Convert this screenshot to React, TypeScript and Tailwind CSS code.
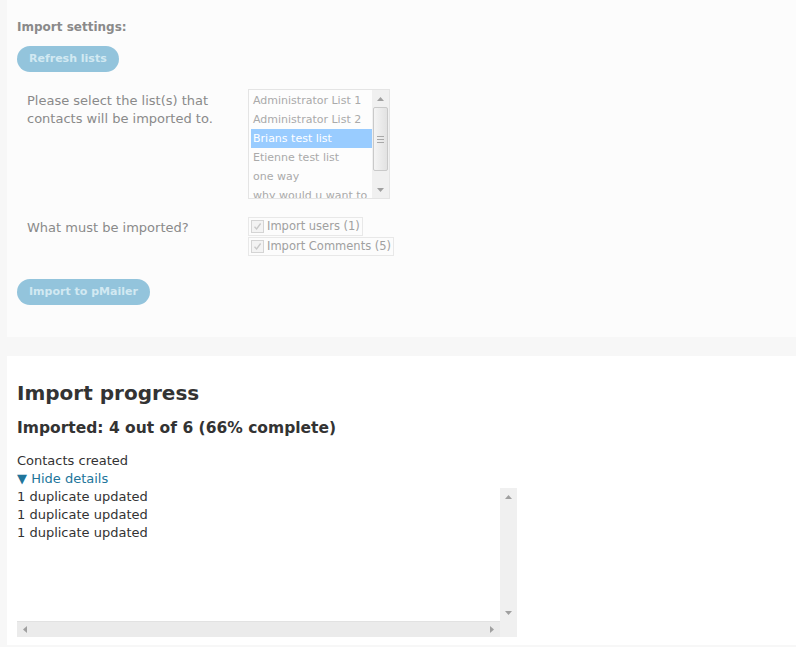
import React from "react";

const font = { fontFamily: '"DejaVu Sans", Verdana, sans-serif' };

function UpArrow({ color = "#a0a0a0" }: { color?: string }) {
  return (
    <svg width="7" height="4" viewBox="0 0 7 4">
      <polygon points="3.5,0 7,4 0,4" fill={color} />
    </svg>
  );
}
function DownArrow({ color = "#a0a0a0" }: { color?: string }) {
  return (
    <svg width="7" height="4" viewBox="0 0 7 4">
      <polygon points="0,0 7,0 3.5,4" fill={color} />
    </svg>
  );
}
function LeftArrow({ color = "#a0a0a0" }: { color?: string }) {
  return (
    <svg width="4" height="7" viewBox="0 0 4 7">
      <polygon points="4,0 4,7 0,3.5" fill={color} />
    </svg>
  );
}
function RightArrow({ color = "#a0a0a0" }: { color?: string }) {
  return (
    <svg width="4" height="7" viewBox="0 0 4 7">
      <polygon points="0,0 4,3.5 0,7" fill={color} />
    </svg>
  );
}

function CheckRow({ label }: { label: string }) {
  return (
    <div className="flex items-center h-[19px] border border-[#e8e8e8] pl-[2px] pr-[2px] w-fit">
      <div className="w-[13px] h-[13px] border border-[#d4d4d4] bg-[#f3f3f3] flex items-center justify-center">
        <svg width="9" height="9" viewBox="0 0 9 9">
          <path d="M1.5 4.8 L3.6 7 L7.6 1.5" stroke="#c8c8c8" strokeWidth="1.3" fill="none" />
        </svg>
      </div>
      <span className="ml-[3px] text-[11.5px] text-[#a0a0a0] leading-[17px]">{label}</span>
    </div>
  );
}

export default function App() {
  const items = [
    "Administrator List 1",
    "Administrator List 2",
    "Brians test list",
    "Etienne test list",
    "one way",
    "why would u want to",
  ];
  return (
    <div className="min-h-screen bg-[#f7f7f7] pl-[7px]" style={font}>
      {/* Import settings panel */}
      <div className="bg-[#fcfcfc] h-[337px] pl-[10px] pt-[19px]">
        <div className="text-[12px] font-bold text-[#8a8a8a] leading-[16px]">Import settings:</div>
        <button className="mt-[11px] h-[26px] px-[12px] rounded-full bg-[#93c4dc] text-[#d2e9f2] text-[11px] font-bold">
          Refresh lists
        </button>
        <div className="flex mt-[17px] pl-[10px]">
          <div className="w-[221px] text-[13px] text-[#8a8a8a] leading-[18px] pt-[3px]">
            Please select the list(s) that
            <br />
            contacts will be imported to.
          </div>
          <div className="w-[142px] h-[110px] border border-[#e4e4e4] bg-[#fdfdfd] flex overflow-hidden">
            <div className="flex-1 pl-[2px] pt-[1px] overflow-hidden">
              {items.map((it, i) => (
                <div
                  key={it}
                  className={
                    "h-[19px] leading-[19px] pl-[2px] text-[11px] whitespace-nowrap " +
                    (i === 2 ? "bg-[#99ccff] text-white" : "text-[#aaaaaa]")
                  }
                >
                  {it}
                </div>
              ))}
            </div>
            <div className="w-[17px] bg-[#f0f0f0] flex flex-col items-center">
              <div className="h-[17px] flex items-center justify-center">
                <UpArrow />
              </div>
              <div className="w-[15px] h-[64px] border border-[#c9c9c9] rounded-[2px] bg-gradient-to-r from-[#f4f4f4] to-[#e2e2e2] flex flex-col items-center justify-center gap-[2px]">
                <div className="w-[7px] h-px bg-[#a8a8a8]" />
                <div className="w-[7px] h-px bg-[#a8a8a8]" />
                <div className="w-[7px] h-px bg-[#a8a8a8]" />
              </div>
              <div className="flex-1" />
              <div className="h-[17px] flex items-center justify-center">
                <DownArrow />
              </div>
            </div>
          </div>
        </div>
        <div className="flex mt-[18px] pl-[10px]">
          <div className="w-[221px] text-[13px] text-[#8a8a8a] leading-[18px] pt-[2px]">What must be imported?</div>
          <div className="flex flex-col gap-[1px]">
            <CheckRow label="Import users (1)" />
            <CheckRow label="Import Comments (5)" />
          </div>
        </div>
        <button className="mt-[23px] h-[26px] px-[12px] rounded-full bg-[#93c4dc] text-[#d2e9f2] text-[11px] font-bold">
          Import to pMailer
        </button>
      </div>

      <div className="h-[19px]" />

      {/* Import progress panel */}
      <div className="bg-white h-[289px] pl-[10px] pt-[25px]">
        <div className="text-[20px] font-bold text-[#333333] leading-[24px]">Import progress</div>
        <div className="mt-[13px] text-[15.5px] font-bold text-[#333333] leading-[20px]">
          Imported: 4 out of 6 (66% complete)
        </div>
        <div className="mt-[14px] text-[13px] text-[#333333] leading-[18px]">Contacts created</div>
        <div className="text-[13px] text-[#21759b] leading-[18px]">▼ Hide details</div>
        <div className="w-[500px] h-[149px] flex flex-col">
          <div className="flex flex-1">
            <div className="flex-1 text-[13px] text-[#333333] leading-[18px]">
              <div>1 duplicate updated</div>
              <div>1 duplicate updated</div>
              <div>1 duplicate updated</div>
            </div>
            <div className="w-[17px] bg-[#f0f0f0] flex flex-col items-center justify-between">
              <div className="h-[17px] flex items-center justify-center">
                <UpArrow />
              </div>
              <div className="h-[17px] flex items-center justify-center">
                <DownArrow />
              </div>
            </div>
          </div>
          <div className="flex h-[16px]">
            <div className="flex-1 bg-[#ebebeb] border-t border-[#e2e2e2] flex items-center justify-between px-[6px]">
              <LeftArrow />
              <RightArrow />
            </div>
            <div className="w-[17px] bg-[#f0f0f0]" />
          </div>
        </div>
      </div>
    </div>
  );
}
